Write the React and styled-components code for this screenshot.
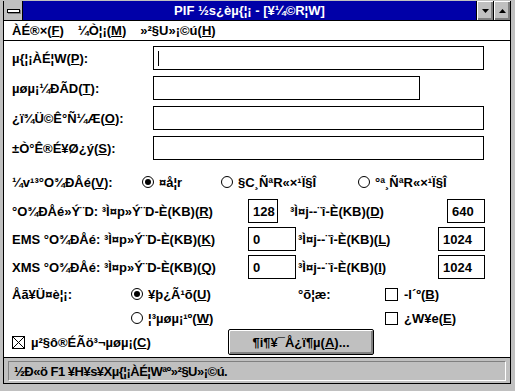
import styled, { createGlobalStyle } from "styled-components";

const GlobalStyle = createGlobalStyle`
  html, body {
    margin: 0;
    padding: 0;
    background: #c0c0c0;
  }
  body {
    font-family: "Liberation Sans", Arial, sans-serif;
    font-size: 13px;
    font-weight: 700;
    color: #000;
  }
`;

const App = () => {
  return (
    <>
      <GlobalStyle />
      <Window>
        <Frame>
          <TitleBar>
            <SysBox>
              <SysBar />
            </SysBox>
            <Title>{"PIF ½s¿èµ{¦¡ - [¥¼©R¦W]"}</Title>
            <TitleButton>
              <svg width="7" height="4" viewBox="0 0 7 4">
                <polygon points="0,0 7,0 3.5,4" fill="#000" />
              </svg>
            </TitleButton>
            <TitleButton>
              <svg width="7" height="4" viewBox="0 0 7 4">
                <polygon points="0,4 7,4 3.5,0" fill="#000" />
              </svg>
            </TitleButton>
          </TitleBar>

          <MenuBar>
            <MenuItem>ÀÉ®×(<u>F</u>)</MenuItem>
            <MenuItem>¼Ò¦¡(<u>M</u>)</MenuItem>
            <MenuItem>»²§U»¡©ú(<u>H</u>)</MenuItem>
          </MenuBar>

          <Content>
            <Fields>
              <Field>
                <Label w={141}>{"µ{¦¡ÀÉ¦W("}<u>P</u>):</Label>
                <Input w={331}>
                  <Caret />
                </Input>
              </Field>
              <Field>
                <Label w={141}>µøµ¡¼ÐÃD(<u>T</u>):</Label>
                <Input w={267} />
              </Field>
              <Field>
                <Label w={141}>¿ï¾Ü©Ê°Ñ¼Æ(<u>O</u>):</Label>
                <Input w={331} />
              </Field>
              <Field>
                <Label w={141}>±Ò°Ê®É¥Ø¿ý(<u>S</u>):</Label>
                <Input w={331} />
              </Field>
            </Fields>

            <OptionRow top={12}>
              <Label w={130}>¼v¹³°O¾ÐÅé(<u>V</u>):</Label>
              <Option w={79}>
                <Radio $on />
                ¤å¦r
              </Option>
              <Option w={137}>
                <Radio />
                §C¸ÑªR«×¹Ï§Î
              </Option>
              <Option>
                <Radio />
                °ª¸ÑªR«×¹Ï§Î
              </Option>
            </OptionRow>

            <MemRows>
              <Field>
                <Label w={236}>°O¾ÐÅé»Ý¨D: ³Ì¤p»Ý¨D-È(KB)(<u>R</u>)</Label>
                <Input w={30}>128</Input>
                <Label gap={12}>³Ì¤j--¨î-È(KB)(<u>D</u>)</Label>
                <Spacer />
                <Input w={38}>640</Input>
              </Field>
              <Field>
                <Label w={236}>EMS °O¾ÐÅé: ³Ì¤p»Ý¨D-È(KB)(<u>K</u>)</Label>
                <Input w={48}>0</Input>
                <Label gap={2}>³Ì¤j--¨î-È(KB)(<u>L</u>)</Label>
                <Spacer />
                <Input w={47}>1024</Input>
              </Field>
              <Field>
                <Label w={236}>XMS °O¾ÐÅé: ³Ì¤p»Ý¨D-È(KB)(<u>Q</u>)</Label>
                <Input w={48}>0</Input>
                <Label gap={2}>³Ì¤j--¨î-È(KB)(<u>I</u>)</Label>
                <Spacer />
                <Input w={47}>1024</Input>
              </Field>
            </MemRows>

            <OptionRow top={5}>
              <Label w={119}>Åã¥Ü¤è¦¡:</Label>
              <Option w={167}>
                <Radio $on />
                ¥þ¿Ã¹õ(<u>U</u>)
              </Option>
              <Label w={87}>°õ¦æ:</Label>
              <Option>
                <Check />
                -I´º(<u>B</u>)
              </Option>
            </OptionRow>
            <OptionRow top={4}>
              <Label w={119} />
              <Option w={167}>
                <Radio />
                ¦³µøµ¡¹º(<u>W</u>)
              </Option>
              <Label w={87} />
              <Option>
                <Check />
                ¿W¥e(<u>E</u>)
              </Option>
            </OptionRow>

            <BottomRow>
              <Option w={216}>
                <Check>
                  <svg width="11" height="11" viewBox="0 0 11 11">
                    <line x1="0" y1="0" x2="11" y2="11" stroke="#000" strokeWidth="1" />
                    <line x1="11" y1="0" x2="0" y2="11" stroke="#000" strokeWidth="1" />
                  </svg>
                </Check>
                µ²§ô®ÉÃö³¬µøµ¡(<u>C</u>)
              </Option>
              <Button>¶i¶¥¯Å¿ï¶µ(<u>A</u>)...</Button>
            </BottomRow>
          </Content>

          <StatusBar>
            <StatusInset>{"½Ð«ö F1 ¥H¥s¥Xµ{¦¡ÀÉ¦Wªº»²§U»¡©ú."}</StatusInset>
          </StatusBar>
        </Frame>
      </Window>
    </>
  );
};

export default App;

const Window = styled.div`
  width: 515px;
  height: 391px;
  box-sizing: border-box;
  background: #c0c0c0;
  padding: 1px 4px 7px 3px;
  display: flex;
`;

const Frame = styled.div`
  flex: 1;
  display: flex;
  flex-direction: column;
  border-left: 1px solid #000;
  border-right: 1px solid #000;
  border-bottom: 1px solid #000;
  background: #fff;
  min-width: 0;
`;

const TitleBar = styled.div`
  display: flex;
  height: 19px;
  border-bottom: 1px solid #000;
  background: #0000a8;
`;

const SysBox = styled.div`
  width: 18px;
  background: #c0c0c0;
  border-right: 1px solid #000;
  display: flex;
  align-items: center;
  justify-content: center;
`;

const SysBar = styled.div`
  width: 11px;
  height: 2px;
  background: #fff;
  border: 1px solid #000;
  box-shadow: 1px 1px 0 #808080;
`;

const Title = styled.div`
  flex: 1;
  color: #fff;
  text-align: center;
  line-height: 19px;
  white-space: nowrap;
`;

const TitleButton = styled.div`
  width: 17px;
  box-sizing: border-box;
  background: #c0c0c0;
  border-left: 1px solid #000;
  box-shadow: inset 1px 1px 0 #fff, inset -2px -2px 0 #808080;
  display: flex;
  align-items: center;
  justify-content: center;
`;

const MenuBar = styled.div`
  display: flex;
  gap: 14px;
  height: 19px;
  align-items: center;
  padding-left: 8px;
  border-bottom: 1px solid #000;
`;

const MenuItem = styled.div`
  white-space: nowrap;
`;

const Content = styled.div`
  flex: 1;
  padding: 5px 25px 0 8px;
`;

const Fields = styled.div`
  display: flex;
  flex-direction: column;
  gap: 6px;
`;

const MemRows = styled.div`
  display: flex;
  flex-direction: column;
  gap: 4px;
  margin-top: 7px;
`;

const Field = styled.div`
  display: flex;
  align-items: center;
  height: 24px;
`;

const Label = styled.div`
  width: ${({ w }) => (w ? `${w}px` : "auto")};
  margin-left: ${({ gap }) => (gap ? `${gap}px` : "0")};
  flex-shrink: 0;
  white-space: nowrap;
`;

const Spacer = styled.div`
  flex: 1;
`;

const Input = styled.div`
  box-sizing: border-box;
  width: ${({ w }) => w}px;
  height: 24px;
  border: 1px solid #000;
  background: #fff;
  padding: 0 4px;
  display: flex;
  align-items: center;
  flex-shrink: 0;
`;

const Caret = styled.span`
  width: 1px;
  height: 15px;
  background: #000;
`;

const OptionRow = styled.div`
  display: flex;
  align-items: center;
  height: 20px;
  margin-top: ${({ top }) => top || 0}px;
`;

const Option = styled.div`
  display: flex;
  align-items: center;
  width: ${({ w }) => (w ? `${w}px` : "auto")};
  flex-shrink: 0;
  white-space: nowrap;
`;

const Radio = styled.span`
  width: 12px;
  height: 12px;
  box-sizing: border-box;
  border: 1px solid #000;
  border-radius: 50%;
  background: #fff;
  margin-right: 5px;
  display: inline-flex;
  align-items: center;
  justify-content: center;
  &::after {
    content: "";
    width: 6px;
    height: 6px;
    border-radius: 50%;
    background: #000;
    display: ${({ $on }) => ($on ? "block" : "none")};
  }
`;

const Check = styled.span`
  width: 13px;
  height: 13px;
  box-sizing: border-box;
  border: 1px solid #000;
  background: #fff;
  margin-right: 6px;
  display: inline-flex;
  svg {
    display: block;
  }
`;

const BottomRow = styled.div`
  display: flex;
  align-items: center;
  margin-top: 1px;
`;

const Button = styled.div`
  box-sizing: border-box;
  width: 146px;
  height: 26px;
  border: 1px solid #000;
  border-radius: 2px;
  background: #c0c0c0;
  box-shadow: inset 1px 1px 0 #fff, inset -2px -2px 0 #808080;
  display: flex;
  align-items: center;
  justify-content: center;
  white-space: nowrap;
`;

const StatusBar = styled.div`
  background: #c0c0c0;
  border-top: 1px solid #000;
  padding: 3px 4px 2px 4px;
`;

const StatusInset = styled.div`
  box-sizing: border-box;
  height: 20px;
  border-top: 1px solid #808080;
  border-left: 1px solid #808080;
  border-bottom: 1px solid #fff;
  border-right: 1px solid #fff;
  padding-left: 5px;
  display: flex;
  align-items: center;
  white-space: nowrap;
  letter-spacing: -0.5px;
`;
